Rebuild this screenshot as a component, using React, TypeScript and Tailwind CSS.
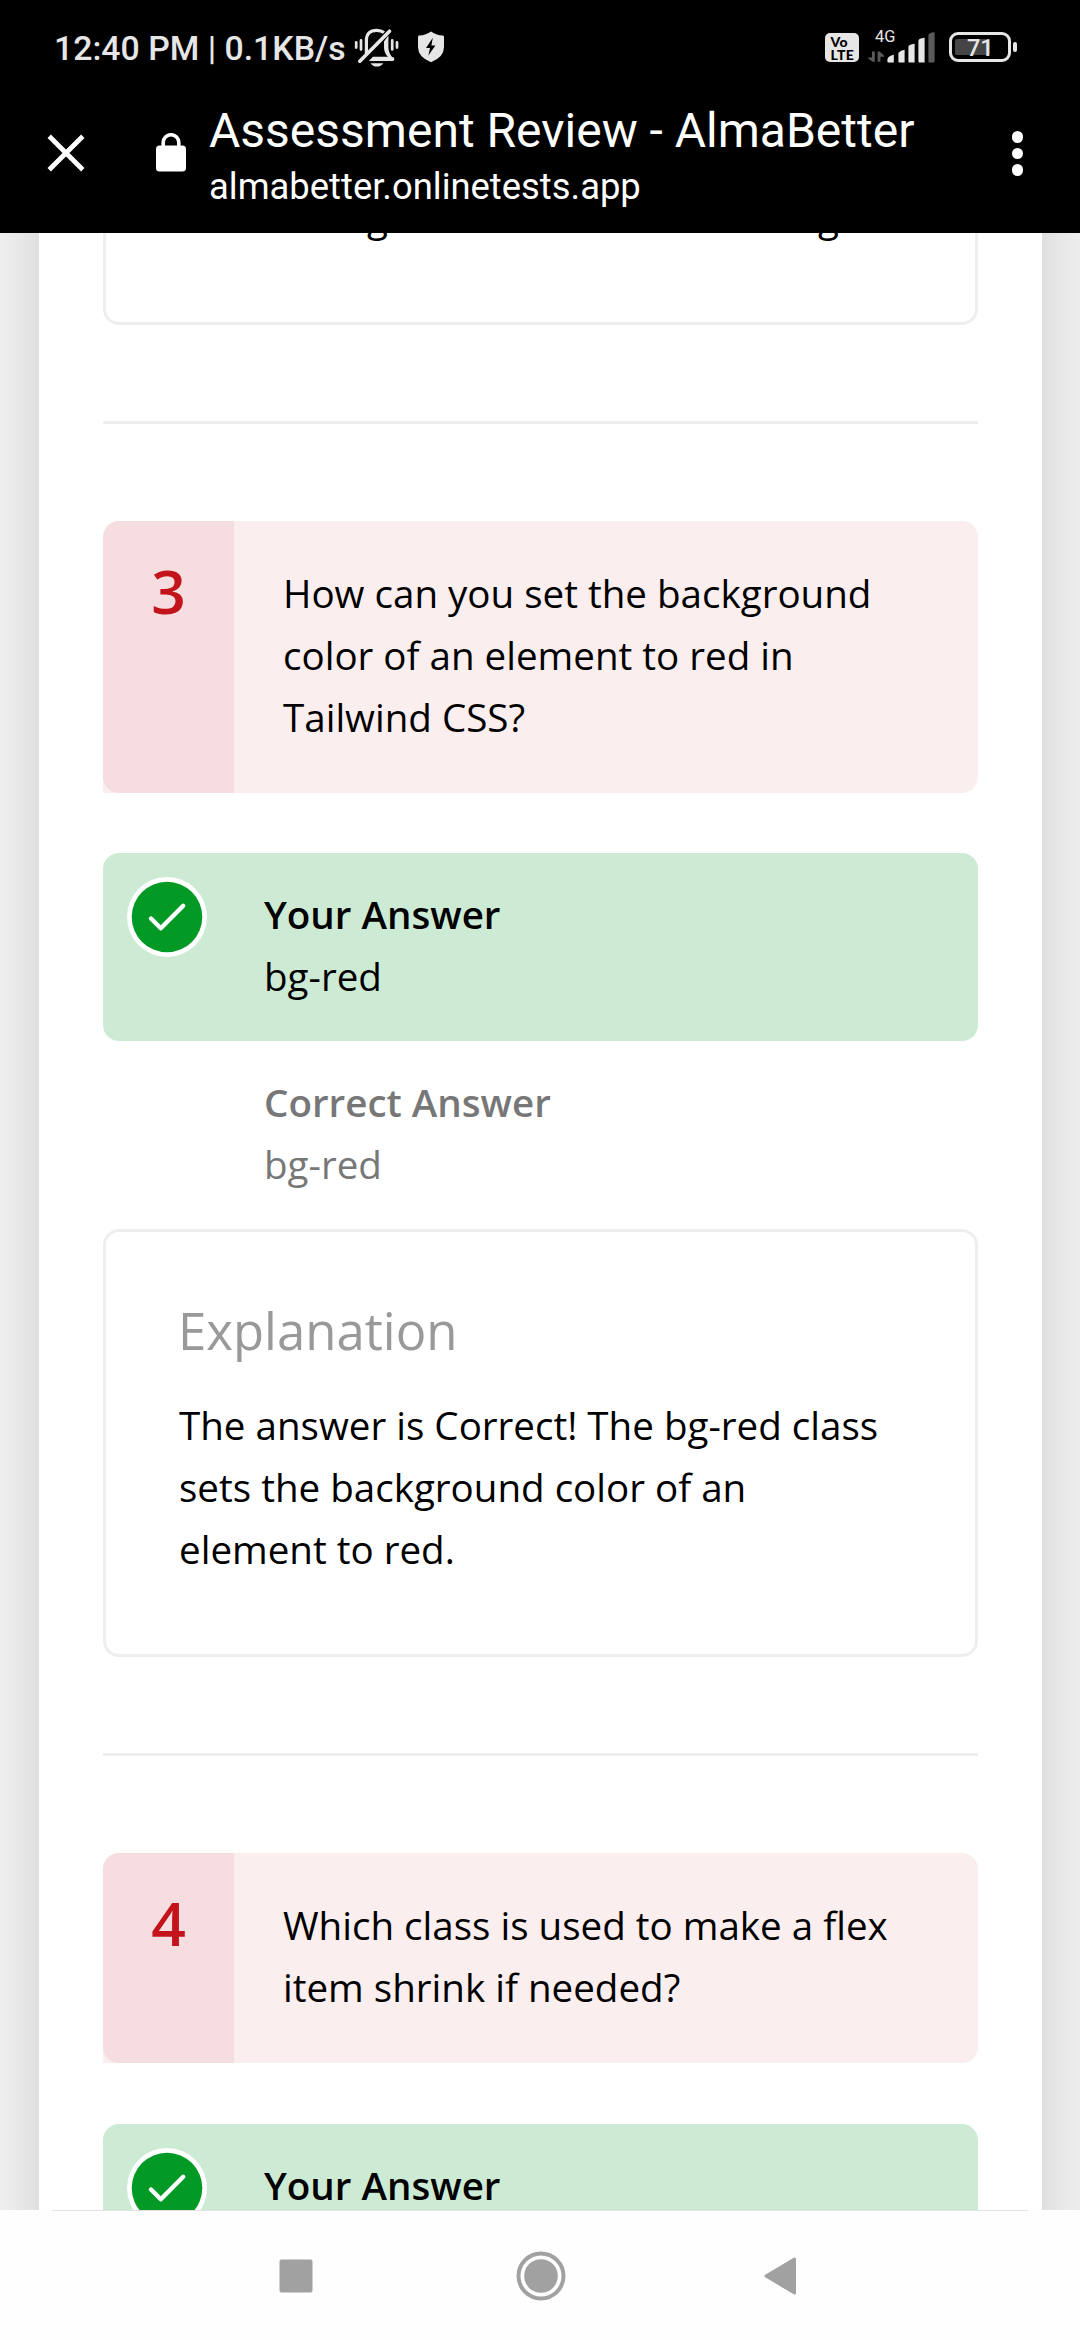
import type { ReactNode } from "react";

function BellOffIcon() {
  return (
    <svg width="46" height="40" viewBox="0 0 46 40" fill="none" stroke="#e6e6e6" className="ml-[7px] mt-[28px]">
      <path d="M13.4 26V12.5Q13.4 2.3 23.8 2.3Q28 2.3 31 4.6" strokeWidth="3.2" />
      <path d="M35.4 7.5V20Q35.6 25.5 40.8 31H36.8Q31.2 25.5 31 20V13.5Z" fill="#e6e6e6" stroke="none" />
      <path d="M6.8 33.2L36.5 3.2" strokeWidth="3.6" strokeLinecap="round" />
      <path d="M16 32.8L20 28.8H37L41 29.5Q42 33 39.5 33H16Z" fill="#e6e6e6" stroke="none" />
      <path d="M17.6 35.2H30.2Q28 38.6 23.9 38.6Q19.8 38.6 17.6 35.2Z" fill="#e6e6e6" stroke="none" />
      <path d="M3.2 14.4V19.6M8 12.3V21.5M39.2 12.3V21.5M44 14.4V19.6" strokeWidth="2.7" strokeLinecap="round" />
    </svg>
  );
}

function ShieldIcon() {
  return (
    <svg width="28" height="32" viewBox="0 0 28 32" className="ml-[18px] mt-[31px]">
      <path
        d="M14 0.4Q18.5 4 26 4.6Q27 4.7 27 6V16Q27 26 14 31.3Q1 26 1 16V6Q1 4.7 2 4.6Q9.5 4 14 0.4Z"
        fill="#e6e6e6"
      />
      <path d="M15.8 6.8L9 17H13L11.4 24.6L18.4 14.4H14.4Z" fill="#000" />
    </svg>
  );
}

function SignalIcon() {
  return (
    <svg width="70" height="34" viewBox="0 0 70 34" className="ml-[7px] mt-[31px]">
      <g fill="#5a5a5a">
        <path d="M6 20.5H8.8V30.8H6.6L2 27.2V26.4H6Z" />
        <path d="M11.6 20.5H13.6L18.2 24.8V25.8H14.4V30.8H11.6Z" />
      </g>
      <g fill="#e6e6e6">
        <path d="M21.4 28.5Q22 25 27.8 23.8V31.5H22.4Q21.4 31.5 21.4 30.5Z" />
        <path d="M32.4 22.5Q32.4 20.5 38.6 18.8V31.5H33.4Q32.4 31.5 32.4 30.5Z" />
        <path d="M42.4 16Q42.4 13.5 48.6 12.8V31.5H43.4Q42.4 31.5 42.4 30.5Z" />
        <path d="M52.4 10Q52.4 7.4 58.6 6.8V31.5H53.4Q52.4 31.5 52.4 30.5Z" />
      </g>
      <path d="M62.4 4.4Q62.4 1.6 68.6 1.2V30.5Q68.6 31.5 67.6 31.5H63.4Q62.4 31.5 62.4 30.5Z" fill="#5a5a5a" />
    </svg>
  );
}

function StatusBar() {
  return (
    <div className="flex h-[96px] items-start text-[#e6e6e6]">
      <span className="mt-[29px] ml-[54px] whitespace-pre text-[33.8px] leading-[40px] font-medium">
        12:40 PM | 0.1KB/s
      </span>
      <BellOffIcon />
      <ShieldIcon />
      <div className="mr-[63px] ml-auto flex items-start">
        <div className="mt-[33px] flex h-[29px] w-[34px] flex-col items-start rounded-[5px] bg-[#e6e6e6] pt-[2px] pl-[5.5px] font-['Lato'] text-[14px] leading-[13px] font-black tracking-[0.3px] text-black">
          <span>Vo</span>
          <span>LTE</span>
        </div>
        <div className="relative flex">
          <SignalIcon />
          <span className="absolute top-[27px] left-[16px] text-[16.4px] leading-[20px]">4G</span>
        </div>
        <div className="relative mt-[32px] ml-[13px] flex h-[30px] w-[62px] items-center rounded-[9px] border-[3.5px] border-[#e6e6e6] pl-[3px]">
          <span className="h-[16px] w-[35px] rounded-[2px] bg-[#454545]" />
          <span className="absolute top-[-1px] left-[15px] text-[23.5px] leading-[28px] font-medium">71</span>
        </div>
        <span className="mt-[42px] ml-[2px] h-[10px] w-[4px] rounded-[2px] bg-[#e6e6e6]" />
      </div>
    </div>
  );
}

function BrowserBar() {
  return (
    <div className="flex h-[137px] items-start text-white">
      <svg width="38" height="38" viewBox="0 0 38 38" className="mt-[38px] ml-[47px]">
        <path d="M2.2 2.2L35.8 35.8M35.8 2.2L2.2 35.8" stroke="#fff" strokeWidth="4.8" />
      </svg>
      <svg width="30" height="39" viewBox="0 0 30 39" className="mt-[37px] ml-[71px]">
        <path d="M7.2 15V9.5A7.8 7.8 0 0 1 22.8 9.5V15" fill="none" stroke="#fff" strokeWidth="3.6" />
        <rect y="12.6" width="30" height="26" rx="3.6" fill="#fff" />
      </svg>
      <div className="ml-[23px] flex flex-col whitespace-nowrap">
        <span className="mt-[7px] text-[48px] leading-[56px]">Assessment Review - AlmaBetter</span>
        <span className="mt-[6px] text-[36.4px] leading-[44px]">almabetter.onlinetests.app</span>
      </div>
      <div className="mt-[35px] mr-[57px] ml-auto flex flex-col gap-[5px]">
        <span className="size-[11.5px] rounded-full bg-white" />
        <span className="size-[11.5px] rounded-full bg-white" />
        <span className="size-[11.5px] rounded-full bg-white" />
      </div>
    </div>
  );
}

function Question({ number, children }: { number: number; children: ReactNode }) {
  return (
    <div className="flex rounded-[16px] rounded-bl-none bg-[#faeeee]">
      <div className="w-[131px] rounded-l-[16px] bg-[#f6dee0] pt-[30px] text-center text-[60.5px] leading-[80px] font-semibold text-[#c3141b]">
        {number}
      </div>
      <div className="pt-[41px] pb-[45px] pl-[49px]">{children}</div>
    </div>
  );
}

function YourAnswer({ answer }: { answer: string }) {
  return (
    <div className="relative mt-[60px] h-[188px] rounded-[16px] bg-[#cdebd4] pt-[30px] pl-[161px]">
      <svg width="80" height="80" viewBox="0 0 80 80" className="absolute top-[24px] left-[24px]">
        <circle cx="40" cy="40" r="40" fill="#fff" />
        <circle cx="40" cy="40" r="35.3" fill="#029a25" />
        <path
          d="M24 41.5L33.8 51.3L56.2 28.8"
          fill="none"
          stroke="#fff"
          strokeWidth="4.4"
          strokeLinecap="round"
          strokeLinejoin="round"
        />
      </svg>
      <p className="font-semibold">Your Answer</p>
      <p>{answer}</p>
    </div>
  );
}

function Divider() {
  return <div className="mt-[96px] mb-[97px] h-[3px] bg-[#eeeeee]" />;
}

function NavBar() {
  return (
    <div className="flex h-[130px] flex-col bg-[#fefefe]">
      <div className="mx-[52px] h-px shrink-0 bg-[#e2e2e2]" />
      <div className="flex h-[129px] items-center">
        <svg width="34" height="34" viewBox="0 0 34 34" className="ml-[279px]">
          <rect x="0.5" y="0.5" width="33" height="33" rx="2" fill="#a1a1a1" />
        </svg>
        <svg width="50" height="50" viewBox="0 0 50 50" className="ml-[203px]">
          <circle cx="25" cy="25" r="22.5" fill="none" stroke="#a1a1a1" strokeWidth="4" />
          <circle cx="25" cy="25" r="16.8" fill="#a1a1a1" />
        </svg>
        <svg width="33" height="38" viewBox="0 0 33 38" className="ml-[198px]">
          <path
            d="M2 19L30.5 2V36Z"
            fill="#a1a1a1"
            stroke="#a1a1a1"
            strokeWidth="3"
            strokeLinejoin="round"
          />
        </svg>
      </div>
    </div>
  );
}

export default function App() {
  return (
    <div className="flex h-[2340px] w-[1080px] flex-col overflow-hidden bg-white">
      <header className="h-[233px] shrink-0 bg-black font-['Roboto',sans-serif]">
        <StatusBar />
        <BrowserBar />
      </header>
      <main className="flex h-[1977px] shrink-0 overflow-hidden font-['Open_Sans',sans-serif] text-[38.55px] leading-[62px] text-black">
        <div className="w-[39px] bg-linear-to-r from-[#eeeeee] from-10% via-[#e6e6e6] via-65% to-[#dfdfdf]" />
        <section className="w-[1003px] bg-white px-[64px]">
          <div className="flex h-[92px] overflow-hidden rounded-b-[16px] border-x-[3px] border-b-[3px] border-[#eeeeee]">
            <div className="-mt-[47px] flex h-[62px]">
              <span className="ml-[261px]">g</span>
              <span className="ml-[430px]">g</span>
            </div>
          </div>
          <Divider />
          <Question number={3}>
            How can you set the background
            <br />
            color of an element to red in
            <br />
            Tailwind CSS?
          </Question>
          <YourAnswer answer="bg-red" />
          <div className="h-[188px] pt-[30px] pl-[161px] text-[#777777]">
            <p className="font-semibold">Correct Answer</p>
            <p>bg-red</p>
          </div>
          <div className="h-[428px] rounded-[16px] border-[3px] border-[#eeeeee] pt-[61px] pl-[73px]">
            <h2 className="-ml-px text-[50.9px] leading-[76px] text-[#999999]">Explanation</h2>
            <p className="mt-[25px]">
              The answer is Correct! The bg-red class
              <br />
              sets the background color of an
              <br />
              element to red.
            </p>
          </div>
          <Divider />
          <Question number={4}>
            Which class is used to make a flex
            <br />
            item shrink if needed?
          </Question>
          <div className="pt-px">
            <YourAnswer answer="flex-shrink" />
          </div>
        </section>
        <div className="w-[38px] bg-linear-to-r from-[#dfdfdf] via-[#e8e8e8] via-50% to-[#ededed]" />
      </main>
      <NavBar />
    </div>
  );
}
